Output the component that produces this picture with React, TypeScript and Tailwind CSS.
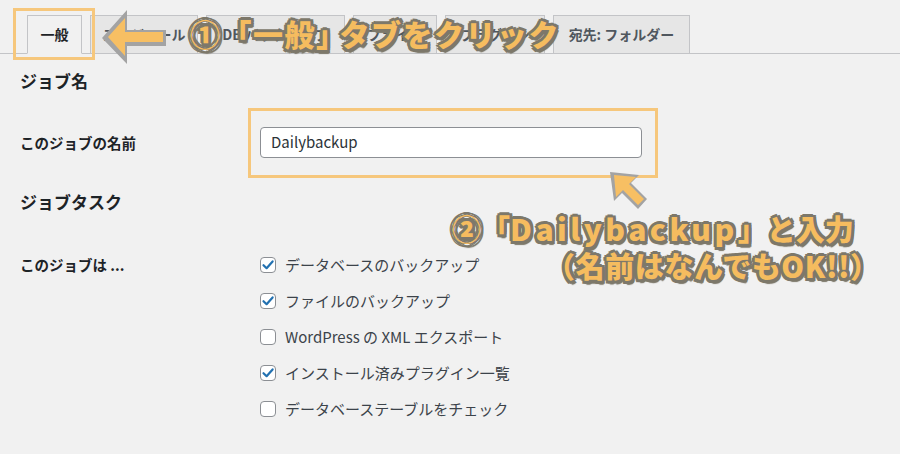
import React from "react";

const jp = "font-['Noto_Sans_CJK_JP','Noto_Sans',sans-serif]";

const tabs = [
  { label: "一般", w: "w-[55px]", active: true },
  { label: "スケジュール", w: "w-[108px]" },
  { label: "DB バックアップ", w: "w-[139px]" },
  { label: "ファイル", w: "w-[84px]" },
  { label: "プラグイン", w: "w-[100px]" },
  { label: "宛先: フォルダー", w: "w-[137px]" },
];

const tasks = [
  { label: "データベースのバックアップ", checked: true },
  { label: "ファイルのバックアップ", checked: true },
  { label: "WordPress の XML エクスポート", checked: false },
  { label: "インストール済みプラグイン一覧", checked: true },
  { label: "データベーステーブルをチェック", checked: false },
];

const outline =
  "[text-shadow:3px_3px_0_#7d786a,-2px_-2px_0_#7d786a,3px_-2px_0_#7d786a,-2px_3px_0_#7d786a,0_3px_0_#7d786a,3px_0_0_#7d786a,0_-3px_0_#7d786a,-3px_0_0_#7d786a,2px_4px_1px_#7d786a]";

function Checkbox({ checked }: { checked: boolean }) {
  return (
    <span className="w-4 h-4 rounded-[4px] border border-[#8c8f94] bg-white flex items-center justify-center shrink-0">
      {checked && (
        <svg width="14" height="14" viewBox="0 0 14 14">
          <path d="M2.5 7.2 L5.6 10.2 L11.6 3.4" fill="none" stroke="#2271b1" strokeWidth="2.2" strokeLinecap="round" strokeLinejoin="round" />
        </svg>
      )}
    </span>
  );
}

export default function App() {
  return (
    <div className={`relative w-[900px] h-[454px] bg-[#f1f1f1] overflow-hidden ${jp}`}>
      {/* tabs */}
      <div className="pt-[15px] border-b border-[#c3c4c7] flex gap-2 pl-[27px]">
        {tabs.map((t) => (
          <div
            key={t.label}
            className={`${t.w} h-[39px] -mb-px flex items-center justify-center border border-[#c3c4c7] text-[14px] font-bold ${
              t.active ? "bg-[#f1f1f1] border-b-[#f1f1f1] text-[#1d2327]" : "bg-[#e6e6e6] text-[#50575e]"
            }`}
          >
            {t.label}
          </div>
        ))}
      </div>

      <div className="px-5">
        <h2 className="mt-[14px] text-[17px] leading-[26px] font-bold text-[#1d2327]">ジョブ名</h2>
        <div className="mt-[33px] flex items-center">
          <div className="w-[240px] text-[14.5px] font-bold text-[#1d2327]">このジョブの名前</div>
          <div className="w-[382px] h-[31px] rounded-[4px] border border-[#8c8f94] bg-white flex items-center px-[10px] text-[15px] text-[#2c3338]">
            Dailybackup
          </div>
        </div>

        <h2 className="mt-[31px] text-[17px] leading-[26px] font-bold text-[#1d2327]">ジョブタスク</h2>
        <div className="mt-[40px] flex items-start">
          <div className="w-[240px] text-[14.5px] font-bold text-[#1d2327] leading-[20px]">このジョブは ...</div>
          <div className="flex flex-col gap-[16px]">
            {tasks.map((t) => (
              <div key={t.label} className="flex items-center gap-[9px] h-[20px] text-[15px] text-[#3c434a]">
                <Checkbox checked={t.checked} />
                <span>{t.label}</span>
              </div>
            ))}
          </div>
        </div>
      </div>

      {/* highlight boxes */}
      <div className="absolute left-[13px] top-[8px] w-[82px] h-[52px] border-[3px] border-[#f6c77c]" />
      <div className="absolute left-[248px] top-[108px] w-[410px] h-[70px] border-[3px] border-[#f6c77c]" />

      {/* arrows */}
      <svg className="absolute left-0 top-0 pointer-events-none" width="900" height="454">
        <polygon points="102,38 127,10 127,30 166,30 166,46 127,46 127,64" fill="#a3a3a3" />
        <polygon points="108,37 125,18 125,32 163,32 163,42 125,42 125,56" fill="#f7bf63" />
        <polygon points="610,172 639,175 631,183 647,199 638,209 622,193 614,201" fill="#a3a3a3" />
        <polygon points="614,175 636,177 629,184 644,199 638,205 623,190 616,197" fill="#f7bf63" />
      </svg>

      {/* annotations */}
      <div className={`absolute left-[190px] top-[15px] text-[30px] leading-[36px] tracking-[1.5px] font-black text-[#f5bc5f] whitespace-nowrap ${outline}`}>
        ①「一般」<span className="-ml-[8px]">タブをクリック</span>
      </div>
      <div className={`absolute left-[452px] top-[209px] text-[29px] leading-[38px] font-black text-[#f5bc5f] whitespace-nowrap ${outline}`}>
        ②「<span className="text-[30px] tracking-[3.5px]">Dailybackup</span>」と入力
      </div>
      <div className={`absolute left-[546px] top-[246px] text-[29px] leading-[38px] tracking-[0.6px] font-black text-[#f5bc5f] whitespace-nowrap ${outline}`}>
        （名前はなんでもOK!!）
      </div>
    </div>
  );
}
